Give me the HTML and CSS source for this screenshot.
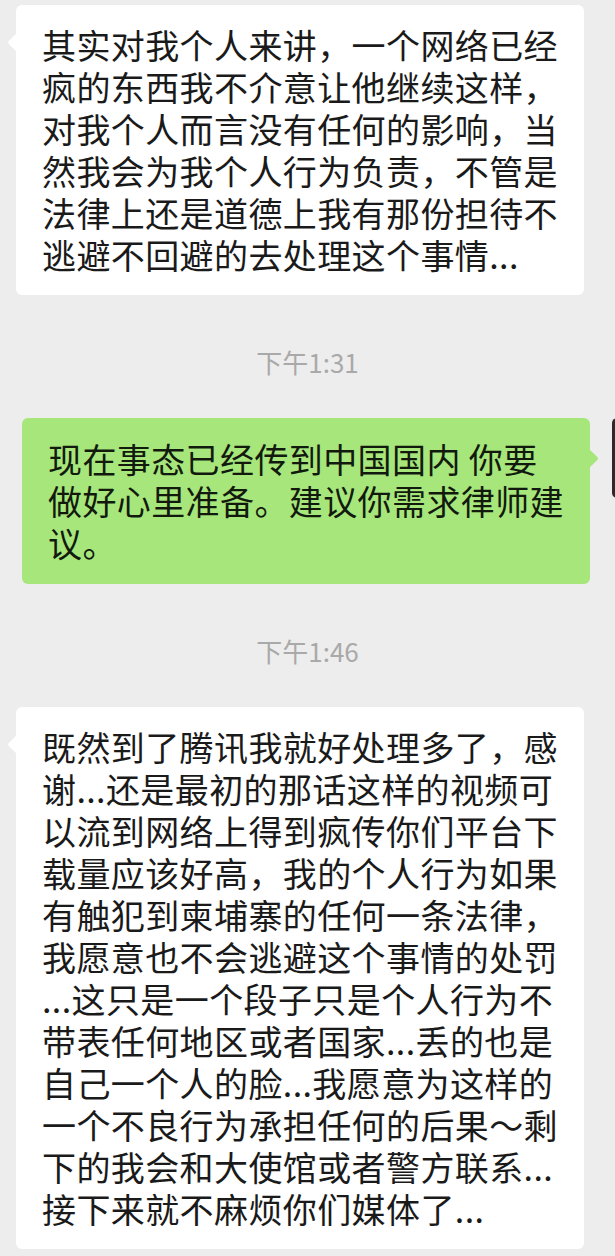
FILE: index.html
```html
<!DOCTYPE html>
<html lang="zh-CN">
<head>
    <meta charset="UTF-8">
    <meta name="viewport" content="width=device-width, initial-scale=1.0">
    <link rel="stylesheet" href="styles.css">
    <title>聊天记录</title>
</head>
<body>
    <div class="chat">
        <!-- incoming -->
        <div class="row in">
            <div class="bubble">其实对我个人来讲，一个网络已经<br>疯的东西我不介意让他继续这样，<br>对我个人而言没有任何的影响，当<br>然我会为我个人行为负责，不管是<br>法律上还是道德上我有那份担待不<br>逃避不回避的去处理这个事情...</div>
        </div>

        <div class="time">下午1:31</div>

        <!-- outgoing -->
        <div class="row out">
            <div class="bubble">现在事态已经传到中国国内 你要<br>做好心里准备。建议你需求律师建<br>议。</div>
            <div class="avatar"></div>
        </div>

        <div class="time">下午1:46</div>

        <div class="row in">
            <div class="bubble">既然到了腾讯我就好处理多了，感<br>谢...还是最初的那话这样的视频可<br>以流到网络上得到疯传你们平台下<br>载量应该好高，我的个人行为如果<br>有触犯到柬埔寨的任何一条法律，<br>我愿意也不会逃避这个事情的处罚<br>...这只是一个段子只是个人行为不<br>带表任何地区或者国家...丢的也是<br>自己一个人的脸...我愿意为这样的<br>一个不良行为承担任何的后果～剩<br>下的我会和大使馆或者警方联系...<br>接下来就不麻烦你们媒体了...</div>
        </div>
    </div>
</body>
</html>
```

FILE: styles.css
```css
body {
    margin: 0;
    background-color: #ededed;
    font-family: "Noto Sans CJK SC", "Noto Sans", sans-serif;
}
.chat {
    padding-top: 5px;
    overflow: hidden;
}
.row {
    display: flex;
    align-items: flex-start;
}
.row.in {
    padding-left: 16px;
}
.row.out {
    padding-left: 22px;
    gap: 22px;
}
.bubble {
    position: relative;
    flex-shrink: 0;
    width: 516px;
    padding: 19px 26px;
    border-radius: 6px;
    background-color: #ffffff;
    color: #1a1a1a;
    font-size: 34px;
    line-height: 42px;
    letter-spacing: 0.4px;
    white-space: nowrap;
}
/* little tail pointing to the sender */
.bubble::before {
    content: "";
    position: absolute;
    width: 13px;
    height: 13px;
    border-radius: 2px;
    background-color: inherit;
    transform: rotate(45deg);
}
.in .bubble::before {
    left: -6px;
    top: 31px;
}
.out .bubble {
    padding: 20px 26px;
    background-color: #a7e67b;
    color: #121a0e;
}
.out .bubble::before {
    right: -6px;
    top: 34px;
}
.avatar {
    flex-shrink: 0;
    width: 80px;
    height: 80px;
    border-radius: 5px;
    background-color: #2f2929;
}
.time {
    margin: 52px 0 41px;
    text-align: center;
    font-size: 26px;
    line-height: 30px;
    color: #a9a9a9;
}
```
